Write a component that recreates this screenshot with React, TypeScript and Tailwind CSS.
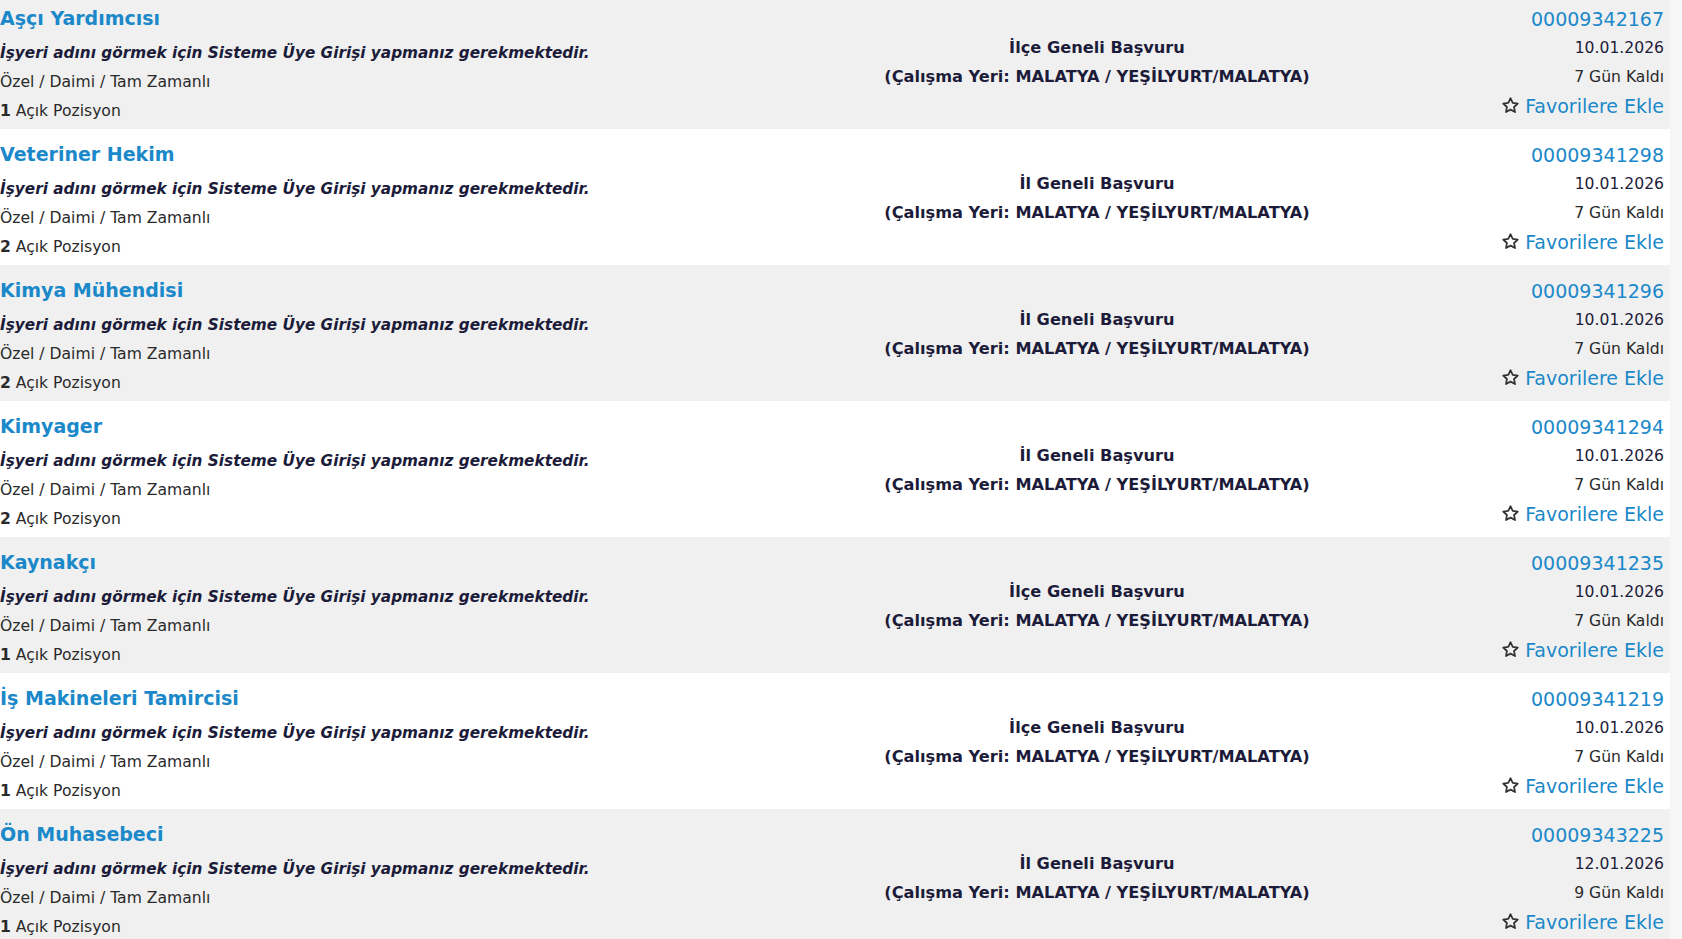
import React from "react";

type Job = {
  title: string;
  scope: string;
  id: string;
  date: string;
  left: string;
  count: string;
};

const jobs: Job[] = [
  { title: "Aşçı Yardımcısı", scope: "İlçe Geneli Başvuru", id: "00009342167", date: "10.01.2026", left: "7 Gün Kaldı", count: "1" },
  { title: "Veteriner Hekim", scope: "İl Geneli Başvuru", id: "00009341298", date: "10.01.2026", left: "7 Gün Kaldı", count: "2" },
  { title: "Kimya Mühendisi", scope: "İl Geneli Başvuru", id: "00009341296", date: "10.01.2026", left: "7 Gün Kaldı", count: "2" },
  { title: "Kimyager", scope: "İl Geneli Başvuru", id: "00009341294", date: "10.01.2026", left: "7 Gün Kaldı", count: "2" },
  { title: "Kaynakçı", scope: "İlçe Geneli Başvuru", id: "00009341235", date: "10.01.2026", left: "7 Gün Kaldı", count: "1" },
  { title: "İş Makineleri Tamircisi", scope: "İlçe Geneli Başvuru", id: "00009341219", date: "10.01.2026", left: "7 Gün Kaldı", count: "1" },
  { title: "Ön Muhasebeci", scope: "İl Geneli Başvuru", id: "00009343225", date: "12.01.2026", left: "9 Gün Kaldı", count: "1" },
];

function Star() {
  return (
    <svg width="19" height="19" viewBox="0 0 24 24" fill="none" stroke="#333" strokeWidth="2.2" strokeLinejoin="round" className="mr-[5px] mb-[2px]">
      <path d="M12 2.8l2.8 5.9 6.4.8-4.7 4.4 1.2 6.4L12 17.2l-5.7 3.1 1.2-6.4-4.7-4.4 6.4-.8z" />
    </svg>
  );
}

export default function App() {
  return (
    <div
      className="w-[1682px] h-[939px] overflow-hidden bg-[#f6f6f6] text-[#222]"
      style={{ fontFamily: '"DejaVu Sans", Verdana, sans-serif' }}
    >
      <div className="w-[1670px] -mt-[7px] flex flex-col">
        {jobs.map((j, i) => (
          <div key={j.id} className={`flex h-[136px] shrink-0 ${i % 2 === 0 ? "bg-[#f0f0f0]" : "bg-white"}`}>
            <div className="w-[800px] pt-[11px]">
              <div className="h-[29px] leading-[29px] mb-[6px] text-[19px] font-bold text-[#1a88c9]">{j.title}</div>
              <div className="leading-[29px] text-[15.3px] font-bold italic text-[#1c1c3a]">
                İşyeri adını görmek için Sisteme Üye Girişi yapmanız gerekmektedir.
              </div>
              <div className="leading-[29px] text-[15.6px] text-[#2a2a2a]">Özel / Daimi / Tam Zamanlı</div>
              <div className="leading-[29px] text-[15.6px] text-[#2a2a2a]">
                <span className="font-bold">{j.count}</span> Açık Pozisyon
              </div>
            </div>
            <div className="w-[594px] pt-[2px] flex flex-col justify-center items-center text-[16.2px] font-bold text-[#1c1c3a]">
              <div className="leading-[29px]">{j.scope}</div>
              <div className="leading-[29px]">(Çalışma Yeri: MALATYA / YEŞİLYURT/MALATYA)</div>
            </div>
            <div className="flex-1 pt-[12px] pr-[6px] flex flex-col items-end">
              <div className="h-[29px] leading-[29px] text-[19px] text-[#1a88c9]">{j.id}</div>
              <div className="leading-[29px] text-[15.6px] text-[#1c1c3a]">{j.date}</div>
              <div className="leading-[29px] text-[15.6px] text-[#2a2a2a]">{j.left}</div>
              <div className="h-[29px] flex items-center text-[19px] text-[#1a88c9]">
                <Star />
                <span className="leading-[29px]">Favorilere Ekle</span>
              </div>
            </div>
          </div>
        ))}
      </div>
    </div>
  );
}
